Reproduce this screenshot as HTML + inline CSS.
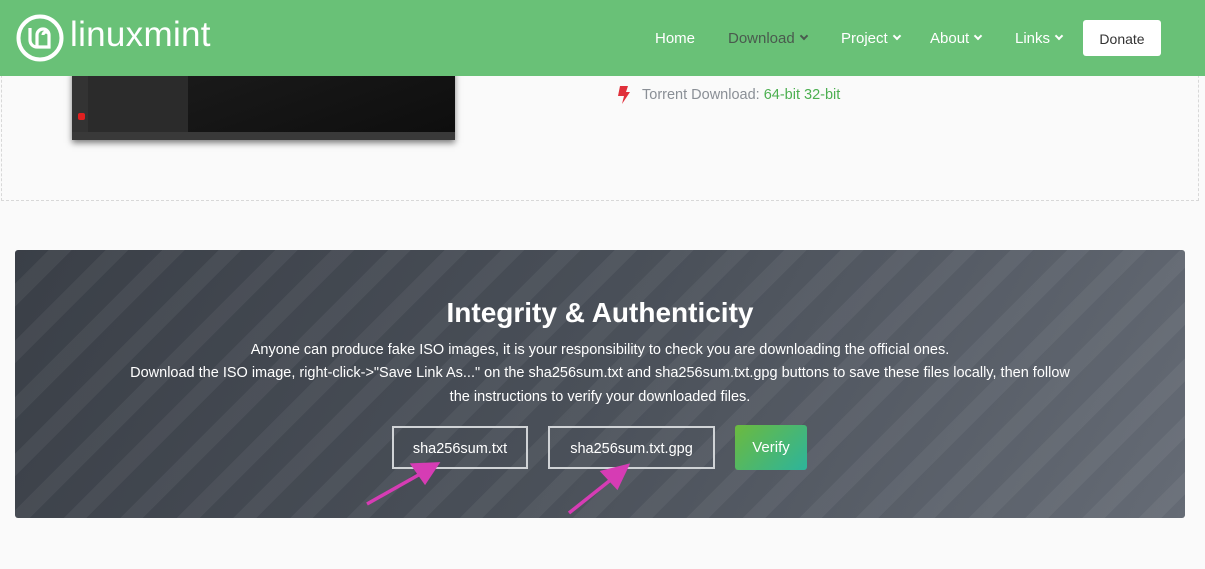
<!DOCTYPE html>
<html><head><meta charset="utf-8"><style>
*{margin:0;padding:0;box-sizing:border-box}
body{width:1205px;height:569px;overflow:hidden;background:#fafafa;font-family:"Liberation Sans",sans-serif;position:relative}
.hdr{position:absolute;left:0;top:0;width:1205px;height:76px;background:#69c177;z-index:5}
.logo{position:absolute;left:16px;top:14px}
.logotxt{position:absolute;left:70px;top:15px;color:#fff;font-size:35px;letter-spacing:0.3px}
.nav{position:absolute;top:30px;font-size:15px;color:#fff}
.car{display:inline-block;width:6px;height:6px;border-right:2px solid currentColor;border-bottom:2px solid currentColor;transform:rotate(45deg);margin-left:6px;position:relative;top:-4px}
.donate{position:absolute;left:1083px;top:20px;width:78px;height:36px;background:#fff;border-radius:3px;color:#333;font-size:14px;text-align:center;line-height:38px}
.dash{position:absolute;left:1px;top:60px;width:1198px;height:141px;border:1px dashed #d8d8d8;border-top:none}
.shot{position:absolute;left:72px;top:70px;width:383px;height:70px;background:#2b2b2b;box-shadow:0 3px 6px rgba(0,0,0,.5)}
.panel{position:absolute;left:15px;top:250px;width:1170px;height:268px;border-radius:3px;overflow:hidden;
background:repeating-linear-gradient(135deg,rgba(255,255,255,0) 0 24px,rgba(255,255,255,.05) 24px 40px),linear-gradient(120deg,#3a3f47 0%,#4a5059 50%,#656b75 100%)}
h2{position:absolute;left:0;width:100%;top:47px;text-align:center;color:#fff;font-size:28px;font-weight:bold}
.p{position:absolute;left:0;width:100%;text-align:center;color:#fff;font-size:14.5px;line-height:23.5px}
.btn{position:absolute;top:176px;height:43px;border:2px solid #d0d3d6;color:#fff;font-size:14.5px;text-align:center;line-height:43px}
.ver{position:absolute;left:720px;top:175px;width:72px;height:45px;border-radius:3px;background:linear-gradient(135deg,#6cba3e,#2db49b);color:#fff;font-size:15px;text-align:center;line-height:45px}
</style></head><body>
<div class="hdr">
<svg class="logo" width="48" height="48" viewBox="0 0 48 48"><circle cx="24" cy="24" r="21.5" fill="none" stroke="#fff" stroke-width="4"/><path d="M14 14v12a7 7 0 0 0 7 7h12v-12a6 6 0 0 0-12 0v11M27 21a3 3 0 0 1 6 0" fill="none" stroke="#fff" stroke-width="3.2"/></svg>
<div class="logotxt">linuxmint</div>
<div class="nav" style="left:655px">Home</div>
<div class="nav" style="left:728px;color:#4a5a4e">Download<span class="car"></span></div>
<div class="nav" style="left:841px">Project<span class="car"></span></div>
<div class="nav" style="left:930px">About<span class="car"></span></div>
<div class="nav" style="left:1015px">Links<span class="car"></span></div>
<div class="donate">Donate</div>
</div>
<div class="dash"></div>
<div class="shot">
<div style="position:absolute;left:0;top:0;width:16px;height:62px;background:#333"></div>
<div style="position:absolute;left:6px;top:43px;width:7px;height:7px;background:#e02020;border-radius:2px"></div>
<div style="position:absolute;left:116px;top:0;width:267px;height:62px;background:linear-gradient(160deg,#1a1a1a,#0e0e0e)"></div>
<div style="position:absolute;left:0;top:62px;width:383px;height:8px;background:#393939"></div>
</div>
<svg style="position:absolute;left:618px;top:86px" width="12" height="18" viewBox="0 0 12 18"><path d="M2 0h8l-2 6h4L4 18l2-8H0z" fill="#e0303b"/></svg>
<div style="position:absolute;left:642px;top:87px;font-size:14.5px;color:#8a8f96">Torrent Download: <span style="color:#4caf50">64-bit 32-bit</span></div>
<div class="panel">
<h2>Integrity &amp; Authenticity</h2>
<div class="p" style="top:89px">Anyone can produce fake ISO images, it is your responsibility to check you are downloading the official ones.</div>
<div class="p" style="top:112px">Download the ISO image, right-click-&gt;"Save Link As..." on the sha256sum.txt and sha256sum.txt.gpg buttons to save these files locally, then follow<br>the instructions to verify your downloaded files.</div>
<div class="btn" style="left:377px;width:136px">sha256sum.txt</div>
<div class="btn" style="left:533px;width:167px">sha256sum.txt.gpg</div>
<div class="ver">Verify</div>
</div>
<svg style="position:absolute;left:0;top:0" width="1205" height="569"><g stroke="#d63cb4" stroke-width="3.5" fill="#d63cb4">
<line x1="367" y1="504" x2="422" y2="473"/><polygon points="437,464 413,465 425,482"/>
<line x1="569" y1="513" x2="613" y2="478"/><polygon points="627,466 603,472 617,487"/></g></svg>
</body></html>
